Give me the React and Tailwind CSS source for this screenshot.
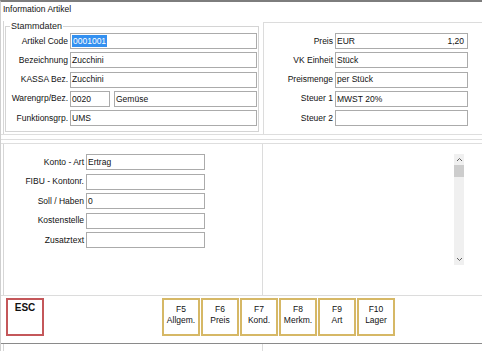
import React from "react";

const Field = ({ className = "", children }) => (
  <div className={"h-[16px] border border-[#ababab] bg-white flex items-center pl-[1px] pr-[3px] leading-none " + className}>
    {children}
  </div>
);

const Row = ({ label, labelW, children }) => (
  <div className="flex items-center h-[16px]">
    <div className={"text-right pr-[2px] whitespace-nowrap " + labelW}>{label}</div>
    {children}
  </div>
);

const FKey = ({ k, label }) => (
  <div className="w-[38px] h-[38px] border-2 border-[#d6b866] bg-white flex flex-col items-center pt-[4px] leading-[11px] text-[8.5px] text-[#111]">
    <span>{k}</span>
    <span>{label}</span>
  </div>
);

const Chevron = ({ up }) => (
  <svg width="7" height="5" viewBox="0 0 7 5" className="mx-auto">
    <path d={up ? "M1 4 L3.5 1.5 L6 4" : "M1 1 L3.5 3.5 L6 1"} fill="none" stroke="#606060" strokeWidth="1" />
  </svg>
);

export default function App() {
  return (
    <div className="w-[482px] h-[351px] bg-white overflow-hidden border-t-2 border-l border-t-[#7d7d7d] border-l-[#cfcfcf] font-['Liberation_Sans',Arial,sans-serif] text-[8.5px] text-[#111] flex flex-col">
      <div className="h-[19px] pl-[2px] pt-[2px] leading-[11px]">Information Artikel</div>

      {/* Stammdaten + Preis */}
      <div className="flex h-[114px] border-b border-[#dedede]">
        <div className="w-[260px] border-l border-[#d6d6d6] ml-[2px] pl-[1px]">
          <fieldset className="w-[254px] h-[111px] border border-[#d4d4d4] px-0 pb-[4px]">
            <legend className="ml-[4px] px-[1px] text-[9px] leading-[10px] text-[#222]">Stammdaten</legend>
            <div className="flex flex-col gap-[3.25px] pt-[2px]">
              <Row label="Artikel Code" labelW="w-[64px]">
                <Field className="w-[187px]">
                  <span className="bg-[#3390f0] text-white px-[1px] leading-[12px]">0001001</span>
                </Field>
              </Row>
              <Row label="Bezeichnung" labelW="w-[64px]">
                <Field className="w-[187px]">Zucchini</Field>
              </Row>
              <Row label="KASSA Bez." labelW="w-[64px]">
                <Field className="w-[187px]">Zucchini</Field>
              </Row>
              <Row label="Warengrp/Bez." labelW="w-[64px]">
                <Field className="w-[40px]">0020</Field>
                <Field className="w-[143px] ml-[4px]">Gemüse</Field>
              </Row>
              <Row label="Funktionsgrp." labelW="w-[64px]">
                <Field className="w-[187px]">UMS</Field>
              </Row>
            </div>
          </fieldset>
        </div>
        <div className="flex-1 border-l border-t border-[#dcdcdc] mt-[1px] pt-[10px]">
          <div className="flex flex-col gap-[3.25px]">
            <Row label="Preis" labelW="w-[71px]">
              <Field className="w-[133px] justify-between">
                <span>EUR</span>
                <span>1,20</span>
              </Field>
            </Row>
            <Row label="VK Einheit" labelW="w-[71px]">
              <Field className="w-[133px]">Stück</Field>
            </Row>
            <Row label="Preismenge" labelW="w-[71px]">
              <Field className="w-[133px]">per Stück</Field>
            </Row>
            <Row label="Steuer 1" labelW="w-[71px]">
              <Field className="w-[133px]">MWST 20%</Field>
            </Row>
            <Row label="Steuer 2" labelW="w-[71px]">
              <Field className="w-[133px]"></Field>
            </Row>
          </div>
        </div>
      </div>

      <div className="h-[4px]"></div>
      <div className="h-[4px] border-t border-[#dedede]"></div>

      {/* Konto */}
      <div className="flex h-[152px] border-t border-[#dedede]">
        <div className="w-[259px] ml-[2px] border-l border-[#d6d6d6] pt-[10px]">
          <div className="flex flex-col gap-[3.5px]">
            <Row label="Konto - Art" labelW="w-[82px]">
              <Field className="w-[119px]">Ertrag</Field>
            </Row>
            <Row label="FIBU - Kontonr." labelW="w-[82px]">
              <Field className="w-[119px]"></Field>
            </Row>
            <Row label="Soll / Haben" labelW="w-[82px]">
              <Field className="w-[119px]">0</Field>
            </Row>
            <Row label="Kostenstelle" labelW="w-[82px]">
              <Field className="w-[119px]"></Field>
            </Row>
            <Row label="Zusatztext" labelW="w-[82px]">
              <Field className="w-[119px]"></Field>
            </Row>
          </div>
        </div>
        <div className="flex-1 border-l border-[#dcdcdc] pt-[10px] pl-[191px]">
          <div className="w-[10px] h-[111px] bg-[#f0f0f0] flex flex-col">
            <div className="h-[11px] flex items-center"><Chevron up /></div>
            <div className="h-[12px] bg-[#cdcdcd]"></div>
            <div className="flex-1"></div>
            <div className="h-[11px] flex items-center"><Chevron /></div>
          </div>
        </div>
      </div>

      {/* Funktionstasten */}
      <div className="h-[48px] border-t border-[#dcdcdc] flex items-start pt-[2px]">
        <div className="ml-[5px] w-[38px] h-[38px] border-2 border-[#c4575a] bg-white flex justify-center pt-[2px]">
          <span className="font-bold text-[10px] leading-[12px] text-[#111]">ESC</span>
        </div>
        <div className="ml-[118px] flex gap-[1px]">
          <FKey k="F5" label="Allgem." />
          <FKey k="F6" label="Preis" />
          <FKey k="F7" label="Kond." />
          <FKey k="F8" label="Merkm." />
          <FKey k="F9" label="Art" />
          <FKey k="F10" label="Lager" />
        </div>
      </div>

      <div className="flex-1 flex border-t border-[#8a8a8a]">
        <div className="w-[259px] ml-[2px] border-l border-[#d6d6d6]"></div>
        <div className="flex-1 border-l border-[#dcdcdc]"></div>
      </div>
    </div>
  );
}
